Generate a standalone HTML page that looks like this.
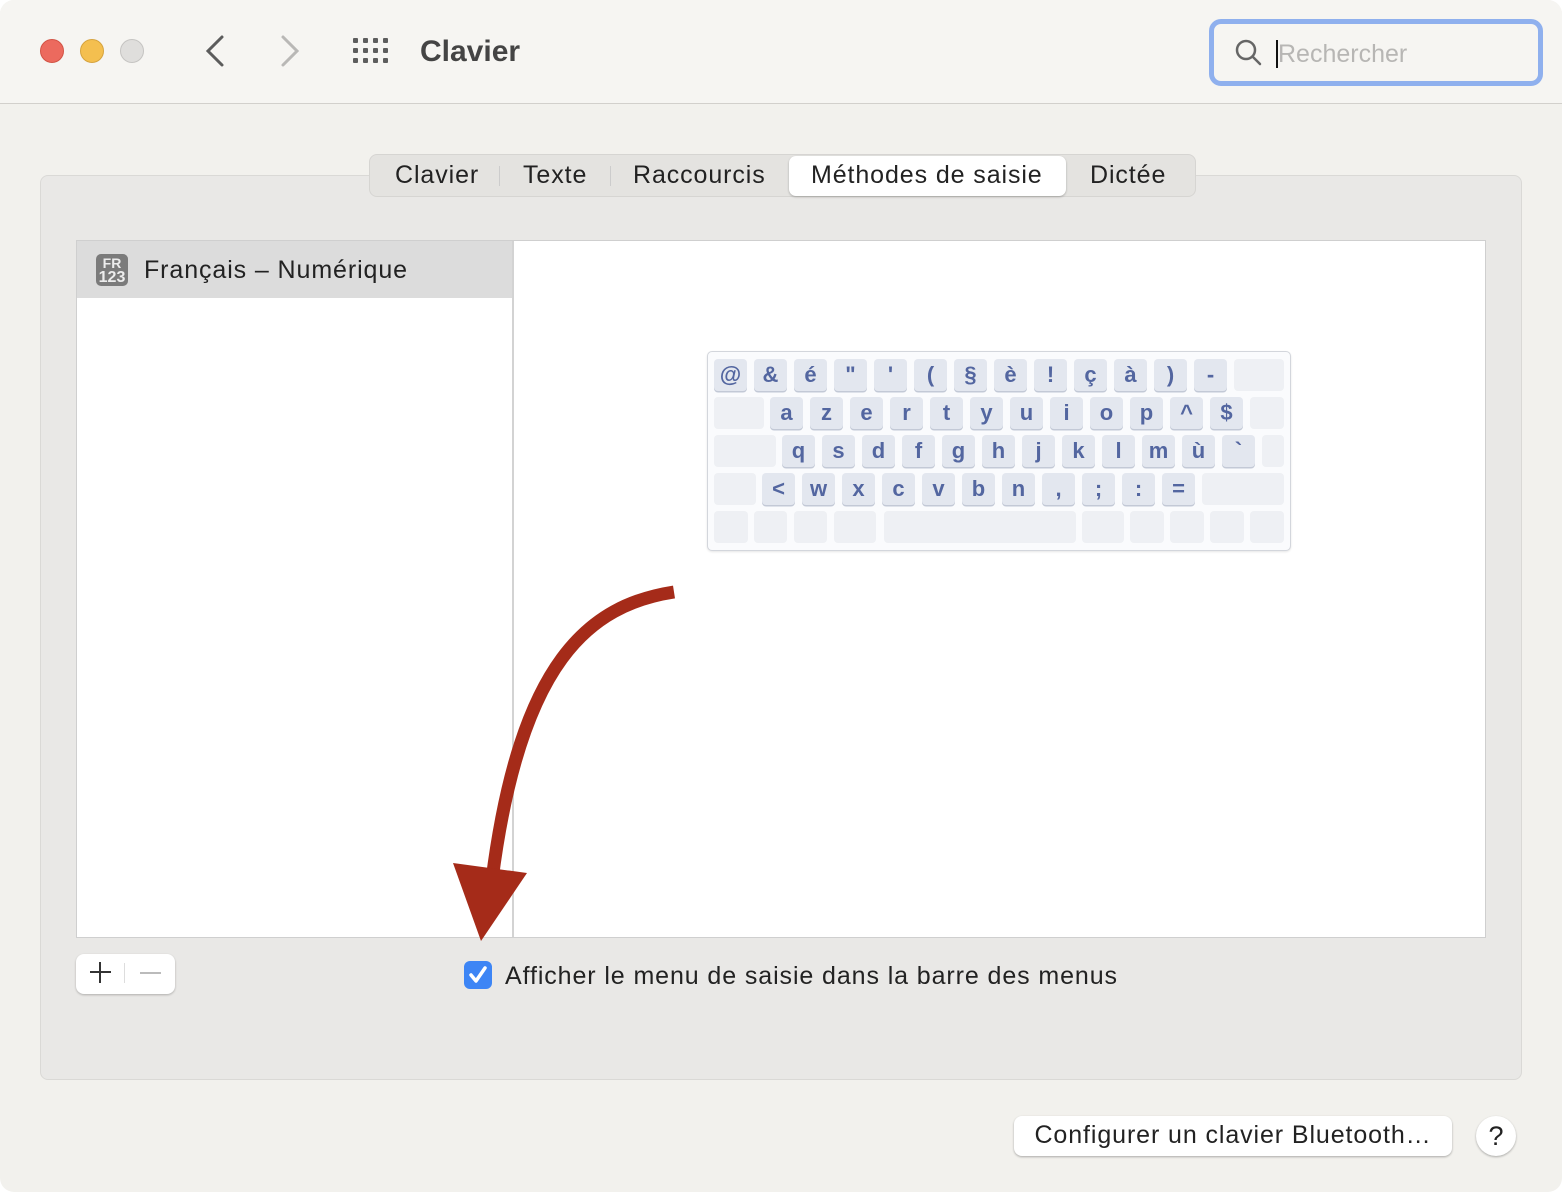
<!DOCTYPE html>
<html><head><meta charset="utf-8"><style>
*{margin:0;padding:0;box-sizing:border-box}
html,body{width:1562px;height:1192px;background:#fff;overflow:hidden;font-family:"Liberation Sans",sans-serif}
.win{position:absolute;left:0;top:0;width:1562px;height:1192px;background:#f2f1ed;border-radius:14px;overflow:hidden}
.title{position:absolute;left:0;top:0;width:1562px;height:104px;background:#f6f5f2;border-bottom:1px solid #d2d0cc}
.a{position:absolute}
.ls{letter-spacing:0.9px}
.dot{position:absolute;width:24px;height:24px;border-radius:50%;top:39px}
.box{position:absolute;left:40px;top:175px;width:1482px;height:905px;background:#e9e8e6;border:1px solid #dad9d6;border-radius:8px}
.tabs{position:absolute;left:369px;top:154px;width:827px;height:43px;background:#e4e3e0;border:1px solid #d6d5d2;border-radius:8px}
.tab{position:absolute;top:0;height:41px;line-height:41px;font-size:25px;color:#222;letter-spacing:0.9px}
.sel{position:absolute;left:419px;top:1px;width:277px;height:40px;background:#fff;border-radius:7px;box-shadow:0 1px 2px rgba(0,0,0,.25)}
.sep{position:absolute;top:11px;width:1px;height:20px;background:#ccc}
.k{position:absolute;width:33px;height:32px;background:#e3e7ef;border-radius:4px;box-shadow:0 1.5px 0 #c3c9d6;color:#5366a0;font-weight:bold;font-size:22px;text-align:center;line-height:32px}
.g{position:absolute;height:32px;background:#eef0f4;border-radius:4px}
</style></head><body><div class="win">
<div class="title">
<div class="dot" style="left:40px;background:#ec6a5e;border:1px solid #d25345"></div>
<div class="dot" style="left:80px;background:#f4bf4f;border:1px solid #d6a33e"></div>
<div class="dot" style="left:120px;background:#dfdedc;border:1px solid #c5c4c2"></div>
<svg class="a" style="left:200px;top:34px" width="30" height="34"><path d="M22 3 L8 17 L22 31" stroke="#5c5c5c" stroke-width="3" fill="none" stroke-linecap="round"/></svg>
<svg class="a" style="left:275px;top:34px" width="30" height="34"><path d="M8 3 L22 17 L8 31" stroke="#b9b8b6" stroke-width="3" fill="none" stroke-linecap="round"/></svg>
<svg class="a" style="left:353px;top:38px" width="38" height="28" fill="#5d5d5d">
<rect x="0" y="0" width="5" height="5" rx="1"/><rect x="10" y="0" width="5" height="5" rx="1"/><rect x="20" y="0" width="5" height="5" rx="1"/><rect x="30" y="0" width="5" height="5" rx="1"/>
<rect x="0" y="10" width="5" height="5" rx="1"/><rect x="10" y="10" width="5" height="5" rx="1"/><rect x="20" y="10" width="5" height="5" rx="1"/><rect x="30" y="10" width="5" height="5" rx="1"/>
<rect x="0" y="20" width="5" height="5" rx="1"/><rect x="10" y="20" width="5" height="5" rx="1"/><rect x="20" y="20" width="5" height="5" rx="1"/><rect x="30" y="20" width="5" height="5" rx="1"/></svg>
<div class="a" style="left:420px;top:35px;font-size:30px;font-weight:bold;color:#444">Clavier</div>
<div class="a" style="left:1209px;top:19px;width:334px;height:67px;border:5px solid #8fb0ee;border-radius:12px;background:#f6f5f2"></div>
<svg class="a" style="left:1234px;top:38px" width="30" height="30"><circle cx="12" cy="12" r="9" stroke="#666" stroke-width="2.5" fill="none"/><path d="M19 19 L26 26" stroke="#666" stroke-width="2.5" stroke-linecap="round"/></svg>
<div class="a" style="left:1276px;top:40px;width:2px;height:28px;background:#111"></div>
<div class="a" style="left:1278px;top:40px;font-size:25px;color:#b7b6b4">Rechercher</div>
</div>
<div class="box"></div>
<div class="tabs">
<div class="sel"></div>
<div class="tab" style="left:25px">Clavier</div><div class="sep" style="left:129px"></div>
<div class="tab" style="left:153px">Texte</div><div class="sep" style="left:240px"></div>
<div class="tab" style="left:263px">Raccourcis</div>
<div class="tab" style="left:441px">Méthodes de saisie</div>
<div class="tab" style="left:720px">Dictée</div>
</div>
<div class="a" style="left:76px;top:240px;width:1410px;height:698px;background:#fff;border:1px solid #cfcfcf"></div>
<div class="a" style="left:512px;top:241px;width:2px;height:696px;background:#d3d3d3"></div>
<div class="a" style="left:77px;top:241px;width:435px;height:57px;background:#dcdcdc"></div>
<div class="a" style="left:96px;top:254px;width:32px;height:32px;border-radius:5px;background:#7b7b7b;color:#ececec;font-weight:bold;font-size:14px;line-height:14px;text-align:center;padding-top:2px">FR<br><span style="font-size:16px">123</span></div>
<div class="a ls" style="left:144px;top:256px;font-size:25px;color:#222">Français – Numérique</div>

<div class="a" style="left:707px;top:351px;width:584px;height:200px;background:#fafbfd;border:1px solid #d3d6dc;border-radius:5px;box-shadow:0 1px 2px rgba(0,0,0,.1)"></div>
<div id="kb"></div>

<svg class="a" style="left:0;top:0" width="1562" height="1192"><path d="M674 592 C590 605 520 660 492 880" stroke="#a52b19" stroke-width="13" fill="none"/><path d="M453 863 L527 873 L481 941 Z" fill="#a52b19"/></svg>

<div class="a" style="left:76px;top:954px;width:99px;height:40px;background:#fff;border-radius:8px;box-shadow:0 1px 2px rgba(0,0,0,.25)"></div>
<div class="a" style="left:90px;top:971px;width:21px;height:2px;background:#333"></div>
<div class="a" style="left:99px;top:962px;width:2px;height:21px;background:#333"></div>
<div class="a" style="left:124px;top:963px;width:1px;height:20px;background:#ddd"></div>
<div class="a" style="left:140px;top:972px;width:21px;height:2px;background:#bbb"></div>
<div class="a" style="left:464px;top:961px;width:28px;height:28px;border-radius:6px;background:#3d85f5"></div>
<svg class="a" style="left:464px;top:961px" width="28" height="28"><path d="M7 14 L12 20 L21 7" stroke="#fff" stroke-width="3.5" fill="none" stroke-linecap="round" stroke-linejoin="round"/></svg>
<div class="a ls" style="left:505px;top:962px;font-size:25px;color:#222">Afficher le menu de saisie dans la barre des menus</div>

<div class="a ls" style="left:1014px;top:1116px;width:438px;height:40px;background:#fff;border-radius:8px;box-shadow:0 1px 2px rgba(0,0,0,.3);font-size:25px;color:#222;text-align:center;line-height:39px">Configurer un clavier Bluetooth…</div>
<div class="a" style="left:1476px;top:1116px;width:40px;height:40px;background:#fff;border-radius:50%;box-shadow:0 1px 2px rgba(0,0,0,.3);font-size:27px;color:#222;text-align:center;line-height:40px">?</div>
</div>
<script>
var h='';function k(x,y,t){h+='<div class="k" style="left:'+x+'px;top:'+y+'px">'+t+'</div>'}
function g(x,y,w){h+='<div class="g" style="left:'+x+'px;top:'+y+'px;width:'+w+'px"></div>'}
var r1=['@','&amp;','é','"',"'",'(','§','è','!','ç','à',')','-'];
r1.forEach(function(c,i){k(714+i*40,359,c)});g(1234,359,50);
g(714,397,50);['a','z','e','r','t','y','u','i','o','p','^','$'].forEach(function(c,i){k(770+i*40,397,c)});g(1250,397,34);
g(714,435,62);['q','s','d','f','g','h','j','k','l','m','ù','`'].forEach(function(c,i){k(782+i*40,435,c)});g(1262,435,22);
g(714,473,42);['&lt;','w','x','c','v','b','n',',',';',':','='].forEach(function(c,i){k(762+i*40,473,c)});g(1202,473,82);
[[714,34],[754,33],[794,33],[834,42],[884,192],[1082,42],[1130,34],[1170,34],[1210,34],[1250,34]].forEach(function(a){g(a[0],511,a[1])});
document.getElementById('kb').innerHTML=h;
</script>
</body></html>
